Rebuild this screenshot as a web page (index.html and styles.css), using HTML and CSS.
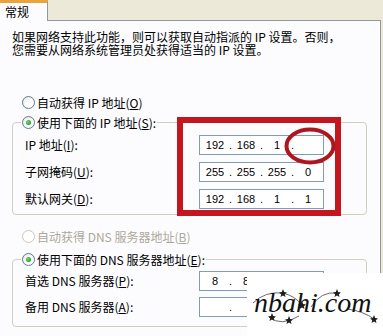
FILE: index.html
```html
<!DOCTYPE html>
<html lang="zh-CN">
<head>
<meta charset="utf-8">
<title>IP 设置</title>
<link rel="stylesheet" href="styles.css">
</head>
<body>
<div class="page">
  <div class="tabbar">
    <div class="tab">常规</div>
    <div class="tabfill"></div>
  </div>
  <div class="panel">
    <p class="intro"><span class="line">如果网络支持此功能，则可以获取自动指派的 IP 设置。否则，</span><span class="line">您需要从网络系统管理员处获得适当的 IP 设置。</span></p>

    <div class="opt first"><span class="radio"></span><span>自动获得 IP 地址(<u>O</u>)</span></div>

    <fieldset class="group g1">
      <legend class="opt"><span class="radio on"></span><span>使用下面的 IP 地址(<u>S</u>):</span></legend>
      <div class="fields">
        <label>IP 地址(<u>I</u>):</label>
        <div class="ipbox"><span class="f">192</span><span class="d">.</span><span class="f">168</span><span class="d">.</span><span class="f">1</span><span class="d">.</span><span class="f"></span></div>
        <label>子网掩码(<u>U</u>):</label>
        <div class="ipbox"><span class="f">255</span><span class="d">.</span><span class="f">255</span><span class="d">.</span><span class="f">255</span><span class="d">.</span><span class="f">0</span></div>
        <label>默认网关(<u>D</u>):</label>
        <div class="ipbox"><span class="f">192</span><span class="d">.</span><span class="f">168</span><span class="d">.</span><span class="f">1</span><span class="d">.</span><span class="f">1</span></div>
      </div>
    </fieldset>

    <div class="opt disabled"><span class="radio off"></span><span>自动获得 DNS 服务器地址(<u>B</u>)</span></div>

    <fieldset class="group g2">
      <legend class="opt"><span class="radio on"></span><span>使用下面的 DNS 服务器地址(<u>E</u>):</span></legend>
      <div class="fields">
        <label>首选 DNS 服务器(<u>P</u>):</label>
        <div class="ipbox"><span class="f">8</span><span class="d">.</span><span class="f">8</span><span class="d"></span><span class="f"></span><span class="d"></span><span class="f"></span></div>
        <label>备用 DNS 服务器(<u>A</u>):</label>
        <div class="ipbox"><span class="f"></span><span class="d">.</span><span class="f"></span><span class="d"></span><span class="f"></span><span class="d"></span><span class="f"></span></div>
      </div>
    </fieldset>
  </div>

  <div class="mark-rect"></div>
  <svg class="mark-ellipse" width="52" height="38" viewBox="0 0 52 38">
    <ellipse cx="26" cy="19" rx="23.5" ry="16.5" fill="none" stroke="#ad161e" stroke-width="4"/>
  </svg>

  <div class="watermark">
    <svg class="wm-deco" width="136" height="63" viewBox="0 0 136 63">
      <g fill="none" stroke="#444" stroke-width="0.8">
        <path d="M6 30 Q18 18 36 20 Q48 23 55 32"/>
        <path d="M22 44 Q34 54 52 43"/>
        <path d="M64 34 Q74 18 90 20"/>
        <path d="M100 36 Q116 38 127 46"/>
      </g>
      <g fill="#1e1e1e">
        <path d="M36 16 L37.2 19 L40 19.5 L37.8 21.3 L38.5 24 L36 22.5 L33.5 24 L34.2 21.3 L32 19.5 L34.8 19 Z"/>
        <path d="M25 40 L26.2 43 L29 43.5 L26.8 45.3 L27.5 48 L25 46.5 L22.5 48 L23.2 45.3 L21 43.5 L23.8 43 Z"/>
        <path d="M42 43 L43.2 46 L46 46.5 L43.8 48.3 L44.5 51 L42 49.5 L39.5 51 L40.2 48.3 L38 46.5 L40.8 46 Z"/>
        <path d="M55 28 L56.2 31 L59 31.5 L56.8 33.3 L57.5 36 L55 34.5 L52.5 36 L53.2 33.3 L51 31.5 L53.8 31 Z"/>
        <path d="M90 16 L91.2 19 L94 19.5 L91.8 21.3 L92.5 24 L90 22.5 L87.5 24 L88.2 21.3 L86 19.5 L88.8 19 Z"/>
        <path d="M127 42 L128.2 45 L131 45.5 L128.8 47.3 L129.5 50 L127 48.5 L124.5 50 L125.2 47.3 L123 45.5 L125.8 45 Z"/>
      </g>
    </svg>
    <span class="wm-text">nbahi.com</span>
  </div>
</div>
</body>
</html>
```

FILE: styles.css
```css
html, body {
  margin: 0;
  padding: 0;
}
body {
  background: #ece9d8;
  font-family: "Noto Sans CJK SC", sans-serif;
  font-size: 12px;
  color: #000;
  overflow: hidden;
}
.page {
  position: relative;
  width: 381px;
  height: 336px;
}
.tabbar {
  display: flex;
  height: 21px;
}
.tab {
  width: 48px;
  box-sizing: border-box;
  border-top: 3px solid #e9a53c;
  border-right: 1px solid #919b9c;
  background: #fcfcfe;
  padding-left: 5px;
  line-height: 18px;
}
.tabfill {
  flex: 1;
  border-bottom: 1px solid #919b9c;
}
.panel {
  background: #fcfcfe;
  border-right: 1px solid #919b9c;
  padding-left: 12px;
  height: 315px;
}
.intro {
  margin: 0;
  padding-top: 9px;
  display: flex;
  flex-direction: column;
  white-space: nowrap;
}
.intro .line {
  display: block;
  height: 13px;
  line-height: 13px;
}
.opt {
  display: flex;
  align-items: center;
  gap: 2px;
  height: 20px;
  margin-left: 10px;
  white-space: nowrap;
}
.opt.first {
  margin-top: 36px;
}
.opt.disabled {
  margin-top: 11px;
  color: #aca899;
}
.radio {
  width: 13px;
  height: 13px;
  box-sizing: border-box;
  border-radius: 50%;
  border: 1px solid #5f7b94;
  background: radial-gradient(circle at 65% 65%, #ffffff 30%, #e4e2d6 100%);
  display: grid;
  place-items: center;
  flex: none;
}
.radio.on::after {
  content: "";
  width: 5px;
  height: 5px;
  border-radius: 50%;
  background: radial-gradient(circle at 40% 40%, #7fd47f 0%, #21a121 70%);
}
.radio.off {
  border-color: #cac8bb;
  background: #fff;
}
.group {
  margin: 0;
  width: 355px;
  box-sizing: border-box;
  border: 1px solid #d0d0bf;
  border-radius: 4px;
  padding: 3px 0 5px 12px;
}
.group legend.opt {
  margin-left: -4px;
  padding: 0 1px;
}
.g2 {
  margin-top: 3px;
  padding: 2px 0 9px 12px;
}
.fields {
  display: grid;
  grid-template-columns: 174px 125px;
  row-gap: 7px;
  align-items: center;
}
.g2 .fields {
  row-gap: 6px;
}
.fields label {
  line-height: 20px;
  white-space: nowrap;
}
.ipbox {
  height: 20px;
  box-sizing: border-box;
  border: 1px solid #7f9db9;
  background: #fff;
  display: flex;
  padding-left: 2px;
  font-family: "Liberation Sans", sans-serif;
  font-size: 11px;
  line-height: 18px;
}
.ipbox .f {
  width: 26px;
  text-align: center;
}
.ipbox .d {
  width: 5px;
  text-align: center;
}
.mark-rect {
  position: absolute;
  left: 177px;
  top: 117px;
  width: 164px;
  height: 99px;
  box-sizing: border-box;
  border: 6px solid #c3161e;
}
.mark-ellipse {
  position: absolute;
  left: 284px;
  top: 127px;
}
.watermark {
  position: absolute;
  left: 247px;
  top: 273px;
  width: 136px;
  height: 63px;
  background: #fff;
}
.wm-deco {
  position: absolute;
  left: 0;
  top: 0;
}
.wm-text {
  position: absolute;
  left: 7px;
  top: 16px;
  font-family: "Liberation Serif", serif;
  font-style: italic;
  font-size: 28px;
  line-height: 28px;
  color: #111;
}
```
